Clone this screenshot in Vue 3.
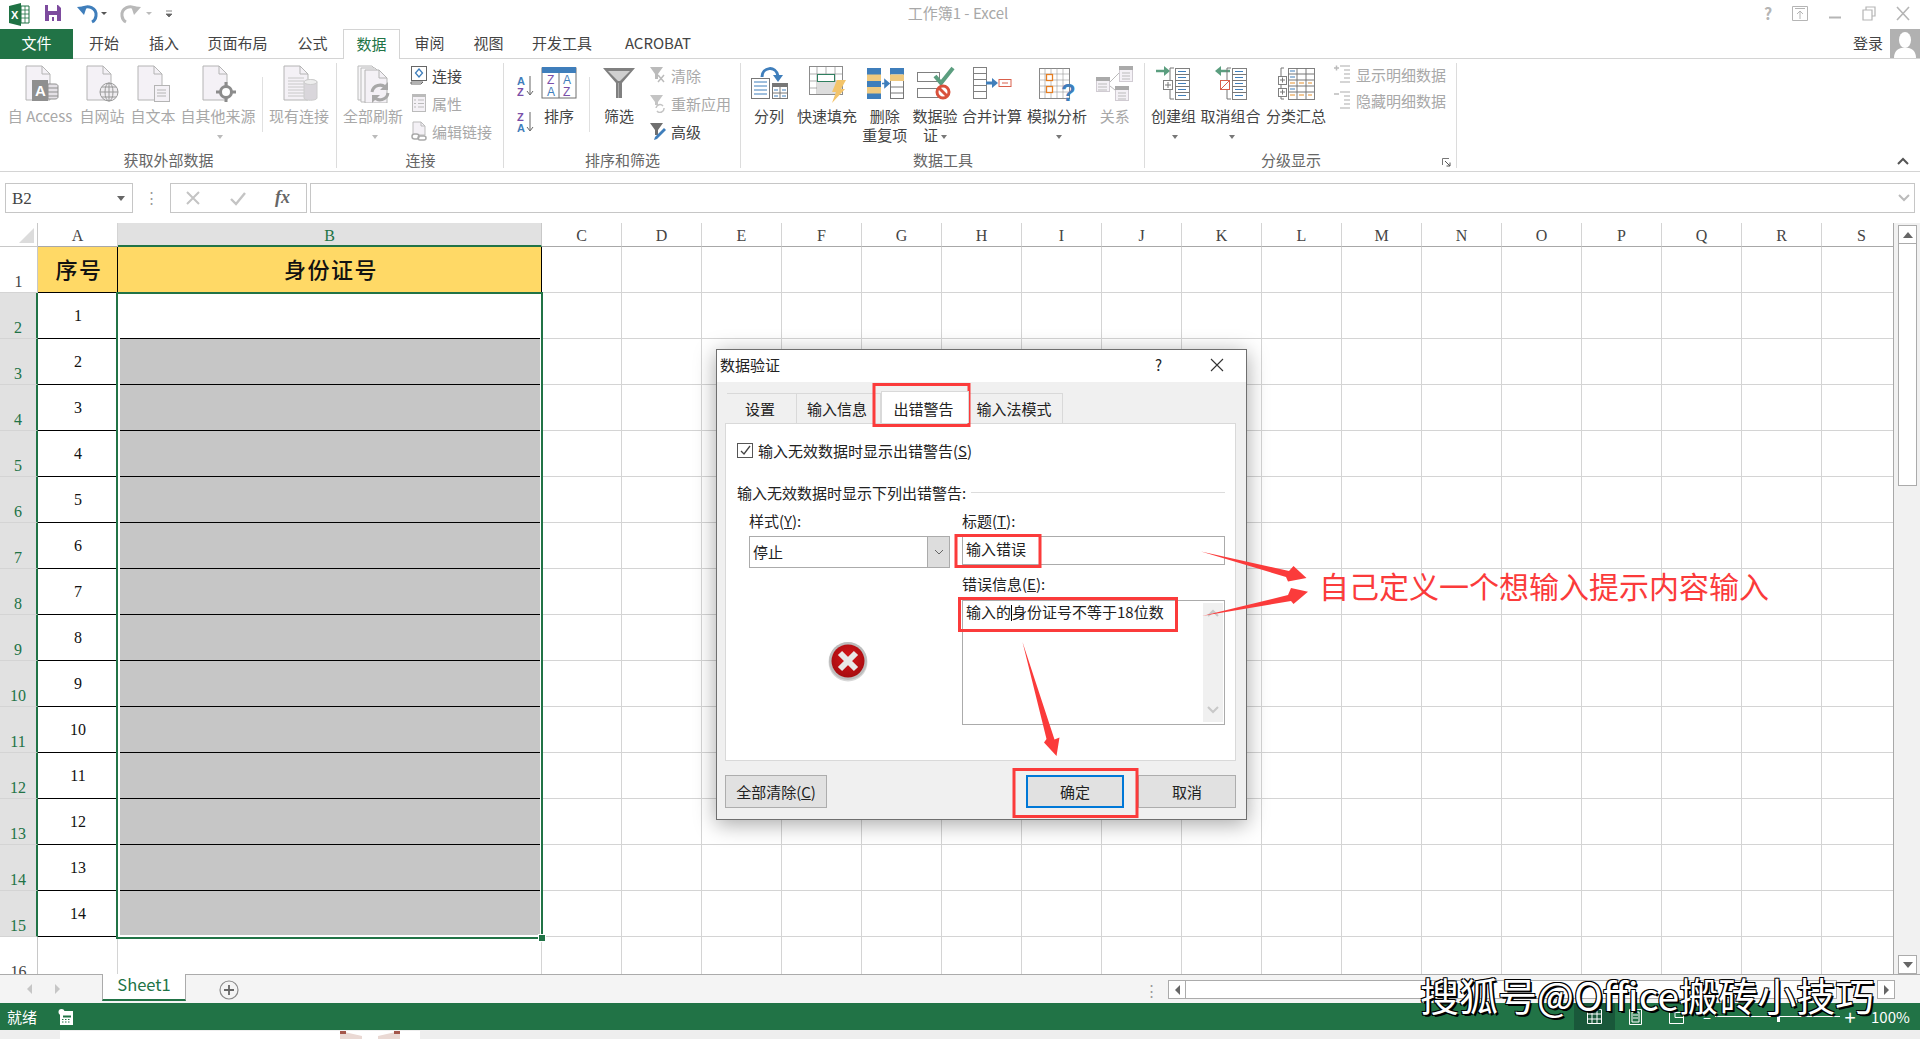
<template>
  <div class="app">
    <!-- 标题栏 -->
    <div class="titlebar">
      <svg class="qat" width="180" height="29" viewBox="0 0 180 29">
        <path d="M9 6l12-3v23l-12-3z" fill="#1f7244" />
        <path d="M21 6h8v17h-8z" fill="#fff" stroke="#1f7244" />
        <path d="M21 10h8M21 14h8M21 18h8M25 6v17" stroke="#1f7244" stroke-width=".8" />
        <text x="11" y="19" font-size="11" font-weight="700" fill="#fff" font-family="Liberation Sans">X</text>
        <path d="M45 5h13l3 3v13H45z" fill="#7d4b9e" />
        <path d="M48 5h9v6h-9z" fill="#fff" />
        <path d="M49 15h8v6h-8z" fill="#fff" />
        <path d="M52 17h2v4h-2z" fill="#7d4b9e" />
        <path d="M81 9c7-5 16-1 15 7-.4 3-2 5-4 6" fill="none" stroke="#3f7ebb" stroke-width="3" />
        <path d="M77 7l10-1-3 9z" fill="#3f7ebb" />
        <path d="M101 12h6l-3 3z" fill="#555" />
        <path d="M137 9c-7-5-16-1-15 7 .4 3 2 5 4 6" fill="none" stroke="#b9b9b9" stroke-width="3" />
        <path d="M141 7l-10-1 3 9z" fill="#b9b9b9" />
        <path d="M146 12h6l-3 3z" fill="#bbb" />
        <path d="M166 11h6M166 14h6l-3 3z" stroke="#666" fill="#666" stroke-width=".8" />
      </svg>
      <div class="doc-title">工作簿1 - Excel</div>
      <div class="win-btns">
        <span class="help">?</span>
        <svg width="16" height="15" viewBox="0 0 16 15"><path d="M.5.5h15v14H.5zM3 2.5h10M8 13V5M5 8l3-3 3 3" fill="none" stroke="#b5b5b5" /></svg>
        <svg width="14" height="15" viewBox="0 0 14 15"><path d="M1 11.5h12" stroke="#b5b5b5" stroke-width="2" /></svg>
        <svg width="14" height="15" viewBox="0 0 14 15"><path d="M4 4V1h9v9h-3M1 4h9v10H1z" fill="none" stroke="#b5b5b5" stroke-width="1.2" /></svg>
        <svg width="14" height="15" viewBox="0 0 14 15"><path d="M1 1l12 13M13 1L1 14" stroke="#b5b5b5" stroke-width="1.6" /></svg>
      </div>
    </div>

    <!-- 选项卡 -->
    <div class="tabs">
      <div
        v-for="t in tabs"
        :key="t.name"
        class="tab"
        :class="{ file: t.name === '文件', active: t.name === '数据' }"
        :style="{ width: t.w + 'px' }"
      >{{ t.name }}</div>
      <div class="login">
        <span>登录</span>
        <svg width="30" height="29" viewBox="0 0 30 29">
          <path d="M0 0h30v29H0z" fill="#b1b1b1" />
          <ellipse cx="15" cy="11" rx="6" ry="8" fill="#fff" />
          <path d="M4 29c0-7 4-9 7-10h8c3 1 7 3 7 10z" fill="#fff" />
        </svg>
      </div>
    </div>

    <!-- 功能区 -->
    <div class="ribbon">
      <div v-for="g in groups" :key="g.label" class="group" :style="{ width: g.w + 'px' }">
        <div class="group-body">
          <template v-for="(b, i) in g.items" :key="i">
            <div v-if="b.sep" class="inner-sep" :style="{ marginLeft: b.ml + 'px', marginRight: b.mr + 'px' }"></div>
            <div
              v-else-if="b.stack"
              class="stack"
              :class="{ tight: b.tight }"
              :style="{ width: b.w + 'px' }"
            >
              <div v-for="s in b.stack" :key="s.label" class="small" :class="{ off: s.off }">
                <svg width="20" height="20" viewBox="0 0 20 20" v-html="icons[s.icon]"></svg>
                <span>{{ s.label }}</span>
              </div>
            </div>
            <div v-else-if="b.sort" class="sort-pair" :style="{ width: b.w + 'px' }">
              <svg width="20" height="24" viewBox="0 0 20 24" v-html="icons.az"></svg>
              <svg width="20" height="24" viewBox="0 0 20 24" v-html="icons.za"></svg>
            </div>
            <div v-else class="big" :class="{ off: b.off }" :style="{ width: b.w + 'px' }">
              <svg width="40" height="38" viewBox="0 0 40 38" v-html="icons[b.icon]"></svg>
              <div class="big-label">{{ b.label }}</div>
              <div class="big-label second">
                {{ b.line2 }}<i v-if="b.arrow" class="caret"></i>
              </div>
            </div>
          </template>
        </div>
        <div class="group-label" :class="{ launch: g.launcher }">
          {{ g.label }}
          <svg v-if="g.launcher" class="launcher" width="9" height="9" viewBox="0 0 9 9">
            <path d="M.5 7V.5H7" fill="none" stroke="#777" /><path d="M3 3l5 5M8 4.5V8H4.5" fill="none" stroke="#555" />
          </svg>
        </div>
      </div>
      <svg class="collapse" width="12" height="8" viewBox="0 0 12 8"><path d="M1 7l5-5 5 5" fill="none" stroke="#555" stroke-width="2" /></svg>
    </div>

    <!-- 编辑栏 -->
    <div class="formula">
      <div class="name-box">B2<i class="name-caret"></i></div>
      <div class="dots">⋮</div>
      <div class="fx-box">
        <svg width="16" height="16" viewBox="0 0 16 16"><path d="M2 2l12 12M14 2L2 14" stroke="#c4c4c4" stroke-width="2" /></svg>
        <svg width="18" height="16" viewBox="0 0 18 16"><path d="M2 9l5 5L16 3" fill="none" stroke="#c4c4c4" stroke-width="2.4" /></svg>
        <span class="fx">fx</span>
      </div>
      <div class="fx-input">
        <svg width="12" height="8" viewBox="0 0 12 8"><path d="M1 1l5 5 5-5" fill="none" stroke="#bbb" stroke-width="2" /></svg>
      </div>
    </div>

    <!-- 工作表 -->
    <div class="work">
      <div class="sheet-wrap">
        <div class="sheet">
          <div class="corner"><i></i></div>
          <div v-for="c in cols" :key="c" class="col-head" :class="{ on: c === 'B' }">{{ c }}</div>
          <template v-for="r in 16" :key="r">
            <div class="row-head" :class="{ on: r >= 2 && r <= 15 }">{{ r }}</div>
            <div v-for="c in cols" :key="c" :class="cellClass(r, c)">
              <template v-if="c === 'A' && r === 1">序号</template>
              <template v-else-if="c === 'A' && r <= 15">{{ r - 1 }}</template>
              <template v-else-if="c === 'B' && r === 1">身份证号</template>
              <div v-else-if="c === 'B' && r >= 2 && r <= 15" class="b-fill" :class="{ blank: r === 2, end: r === 15 }"></div>
            </div>
          </template>
          <div class="selection"><i></i></div>
        </div>
      </div>
      <div class="vscroll">
        <div class="sb-btn"><i class="up"></i></div>
        <div class="sb-thumb"></div>
        <div class="sb-track"></div>
        <div class="sb-btn"><i class="down"></i></div>
      </div>
    </div>

    <!-- 工作表标签 -->
    <div class="sheetbar">
      <div class="nav"><i class="l"></i><i class="r"></i></div>
      <div class="sheet-tab">Sheet1</div>
      <svg class="add" width="20" height="20" viewBox="0 0 20 20">
        <circle cx="10" cy="10" r="9" fill="none" stroke="#8a8a8a" stroke-width="1.2" />
        <path d="M10 5v10M5 10h10" stroke="#666" stroke-width="1.8" />
      </svg>
      <div class="bar-dots">⋮</div>
      <div class="hscroll">
        <div class="h-btn"><i class="l"></i></div>
        <div class="h-thumb"></div>
        <div class="h-track"></div>
        <div class="h-btn"><i class="r"></i></div>
      </div>
    </div>

    <!-- 状态栏 -->
    <div class="status">
      <span class="ready">就绪</span>
      <svg width="16" height="16" viewBox="0 0 16 16">
        <rect x="2" y="2" width="13" height="14" fill="#fff" />
        <circle cx="3.5" cy="3" r="3" fill="#fff" />
        <path d="M5 6.5h8v2H5z" fill="#217346" />
        <path d="M4 10.5h8M4 13h8" stroke="#217346" stroke-dasharray="1.5 1.5" />
      </svg>
      <div class="status-right">
        <div class="view on"><svg width="15" height="15" viewBox="0 0 15 15"><path d="M.5.5h14v14H.5zM5 .5v14M10 .5v14M.5 5h14M.5 10h14" fill="none" stroke="#fff" /></svg></div>
        <div class="view"><svg width="13" height="16" viewBox="0 0 13 16"><path d="M.5.5h12v15H.5zM3 3h7v10H3zM4 6h5M4 9h5" fill="none" stroke="#fff" /></svg></div>
        <div class="view"><svg width="15" height="15" viewBox="0 0 15 15"><path d="M.5 3.5h14v11H.5zM6 .5v8h8" fill="none" stroke="#fff" /></svg></div>
        <span class="minus">–</span>
        <div class="zoom-track"><i></i></div>
        <span class="plus">+</span>
        <span class="pct">100%</span>
      </div>
    </div>

    <!-- 底部残留 -->
    <div class="strip">
      <div class="strip-win">
        <svg width="60" height="9" viewBox="0 0 60 9"><path d="M0 0l22 5v4H0zM60 0L38 5v4h22z" fill="#ead9d4" /><path d="M0 0h6v3H0zM54 0h6v3h-6z" fill="#a4564a" /></svg>
      </div>
    </div>

    <!-- 数据验证对话框 -->
    <div class="dialog">
      <div class="dlg-title">
        <span>数据验证</span>
        <span class="dlg-q">?</span>
        <svg width="14" height="14" viewBox="0 0 14 14"><path d="M1 1l12 12M13 1L1 13" stroke="#333" stroke-width="1.1" /></svg>
      </div>
      <div class="dlg-tabs">
        <div v-for="t in dlgTabs" :key="t.name" class="dlg-tab" :class="{ active: t.name === '出错警告' }" :style="{ width: t.w + 'px' }">{{ t.name }}</div>
      </div>
      <div class="panel">
        <div class="check-row">
          <span class="check">
            <svg width="13" height="13" viewBox="0 0 13 13"><path d="M2 7l3 3 6-8" fill="none" stroke="#444" stroke-width="1.3" /></svg>
          </span>
          <span>输入无效数据时显示出错警告(<u>S</u>)</span>
        </div>
        <div class="section">
          <span>输入无效数据时显示下列出错警告:</span><i></i>
        </div>
        <div class="form">
          <div class="form-left">
            <div class="f-label">样式(<u>Y</u>):</div>
            <div class="select">
              <span>停止</span>
              <div class="sel-btn">
                <svg width="10" height="6" viewBox="0 0 10 6"><path d="M1 1l4 4 4-4" fill="none" stroke="#666" /></svg>
              </div>
            </div>
            <svg class="err" width="42" height="42" viewBox="0 0 42 42">
              <defs>
                <radialGradient id="eg" cx="50%" cy="40%" r="60%">
                  <stop offset="0" stop-color="#d8161a" />
                  <stop offset="1" stop-color="#a60c10" />
                </radialGradient>
              </defs>
              <circle cx="21" cy="22" r="19.5" fill="#d8d8d8" />
              <circle cx="21" cy="21" r="19" fill="#bdbdbd" />
              <circle cx="21" cy="21" r="16.5" fill="url(#eg)" />
              <path d="M13 13l16 16M29 13L13 29" stroke="#e8e8e8" stroke-width="6" />
            </svg>
          </div>
          <div class="form-right">
            <div class="f-label">标题(<u>T</u>):</div>
            <div class="text-input">输入错误</div>
            <div class="f-label second">错误信息(<u>E</u>):</div>
            <div class="textarea">
              <span>输入的<i class="text-caret"></i>身份证号不等于18位数</span>
              <div class="ta-scroll">
                <svg width="12" height="8" viewBox="0 0 12 8"><path d="M1 7l5-5 5 5" fill="none" stroke="#c8c8c8" stroke-width="2" /></svg>
                <svg width="12" height="8" viewBox="0 0 12 8"><path d="M1 1l5 5 5-5" fill="none" stroke="#c8c8c8" stroke-width="2" /></svg>
              </div>
            </div>
          </div>
        </div>
      </div>
      <div class="dlg-foot">
        <div class="btn clear">全部清除(<u>C</u>)</div>
        <div class="btn ok">确定</div>
        <div class="btn cancel">取消</div>
      </div>
    </div>

    <!-- 红色标注 -->
    <svg class="marks" width="1920" height="1039" viewBox="0 0 1920 1039">
      <g fill="none" stroke="#fb3b3b" stroke-width="3">
        <rect x="874" y="384.5" width="95" height="41" />
        <rect x="956" y="535.5" width="84" height="31" />
        <rect x="959.5" y="598.5" width="217" height="32" />
        <rect x="1014" y="769.5" width="123" height="47" />
      </g>
      <g fill="#fb3b3b">
        <path d="M1201 551.5L1289 571 1293.5 566 1306.5 578 1288 581.500 1286 577z" />
        <path d="M1202 616L1288 595 1291 588 1308 591.700 1293.500 604 1291 601z" />
        <path d="M1022.500 642l24 97-2.500 3.500 12.500 13.500 3-18.500-5 2z" />
      </g>
    </svg>
    <div class="note">自己定义一个想输入提示内容输入</div>
    <div class="watermark">搜狐号@Office搬砖小技巧</div>
  </div>
</template>

<script setup>
const tabs = [
  { name: '文件', w: 73 }, { name: '开始', w: 62 }, { name: '插入', w: 58 },
  { name: '页面布局', w: 89 }, { name: '公式', w: 61 }, { name: '数据', w: 57 },
  { name: '审阅', w: 59 }, { name: '视图', w: 59 }, { name: '开发工具', w: 88 },
  { name: 'ACROBAT', w: 104 },
]

const dlgTabs = [
  { name: '设置', w: 70 }, { name: '输入信息', w: 84 },
  { name: '出错警告', w: 88 }, { name: '输入法模式', w: 94 },
]

const cols = 'ABCDEFGHIJKLMNOPQRS'.split('')

const cellClass = (r, c) => {
  if (c === 'A' && r === 1) return 'cell head-cell first'
  if (c === 'B' && r === 1) return 'cell head-cell'
  if (c === 'A' && r <= 15) return 'cell a-cell'
  if (c === 'B' && r <= 15) return 'cell b-cell'
  return 'cell'
}

// 功能区图标
const G = '#8c8c8c'
const BLUE = '#3f7ebb'
const page = (x, fill = '#f4f1f6') =>
  `<path d="M${x} 1h16l8 8v26H${x}z" fill="${fill}" stroke="#b4b4b4"/><path d="M${x + 16} 1v8h8" fill="none" stroke="#b4b4b4"/>`
const rows = (x, w, ys, c = '#8a8a8a') => ys.map(y => `<path d="M${x} ${y}h${w}" stroke="${c}"/>`).join('')
const box = (x, y, w, h, s = '#808080', f = '#fff') =>
  `<rect x="${x + .5}" y="${y + .5}" width="${w}" height="${h}" fill="${f}" stroke="${s}"/>`

const icons = {
  access: page(6) +
    `<rect x="12" y="15" width="16" height="21" fill="#8f8f8f"/><text x="15" y="31" font-size="15" font-weight="700" fill="#fff" font-family="Liberation Sans">A</text>` +
    `<path d="M28 19h7c2 0 3 1 3 2v11c0 1-1 2-3 2h-7z" fill="#e4e1e6" stroke="#8f8f8f"/><path d="M28 23h10M28 27h10M28 31h10" stroke="#8f8f8f"/>`,
  web: page(5) +
    `<circle cx="27" cy="27" r="9" fill="#efedf0" stroke="#999"/><ellipse cx="27" cy="27" rx="4" ry="9" fill="none" stroke="#999"/><path d="M18 27h18M20 22h14M20 32h14M27 18v18" stroke="#999"/>`,
  text: page(5) + box(21, 20, 15, 16, '#b4b4b4', '#f4f1f6') + rows(24, 9, [25, 28, 31], '#b4b4b4'),
  other: page(5) +
    `<circle cx="28" cy="27" r="5.500" fill="#fff" stroke="${G}" stroke-width="3"/><path d="M28 17v4M28 33v4M18 27h4M34 27h4" stroke="${G}" stroke-width="3"/>`,
  existing: page(5) + rows(9, 16, [13, 16, 19, 22, 25, 28, 31], '#c8c8c8') +
    `<path d="M25 17c0-3 13-3 13 0v16c0 3-13 3-13 0z" fill="#d9d6db" stroke="#ccc"/><ellipse cx="31.500" cy="17" rx="6.500" ry="2.500" fill="#eee" stroke="#ccc"/>`,
  refresh: `<path d="M5 1h14l8 8v26H5z" fill="#f7f6f8" stroke="#bbb"/><path d="M8 3h14l8 8v26H8z" fill="#f7f6f8" stroke="#bbb"/><path d="M12 5h14l8 8v25H12z" fill="#f4f1f6" stroke="#b4b4b4"/><path d="M26 5v8h8" fill="none" stroke="#b4b4b4"/>` +
    `<path d="M19 27a8 8 0 0 1 14-4" fill="none" stroke="#a8a8a8" stroke-width="3"/><path d="M35 28a8 8 0 0 1-14 4" fill="none" stroke="#a8a8a8" stroke-width="3"/><path d="M35 17v8h-8zM19 38v-8h8z" fill="#a8a8a8"/>`,
  sort: `<rect x="3" y="3" width="34" height="30" fill="#fff" stroke="#6f6f6f"/><rect x="3" y="2" width="34" height="6" fill="${BLUE}"/><path d="M20 8v25" stroke="#6f6f6f"/>` +
    `<g font-size="12" font-family="Liberation Sans"><text x="8" y="19" fill="#7a4fa8">Z</text><text x="8" y="31" fill="${BLUE}">A</text><text x="24" y="19" fill="${BLUE}">A</text><text x="24" y="31" fill="#7a4fa8">Z</text></g>`,
  filter: `<path d="M4 3h32L23 18v15h-6V18z" fill="#808080"/><path d="M9 6h22L21 16h-2z" fill="#cfcfcf"/><path d="M19 18h1v15h-1z" fill="#aaa"/>`,
  split: `<rect x="2.500" y="13.500" width="18" height="20" fill="#fff" stroke="#777"/>` + rows(5, 13, [17, 21, 25, 29], BLUE) +
    `<rect x="23.500" y="18.500" width="15" height="15" fill="#fff" stroke="#777"/><rect x="23" y="18" width="16" height="4" fill="#777"/><path d="M31 22v12M24 28h15" stroke="#777"/><path d="M25 25h4M33 25h4M25 31h4M33 31h4" stroke="${BLUE}"/>` +
    `<path d="M13 12C13 2 27 0 29 11" fill="none" stroke="${BLUE}" stroke-width="3"/><path d="M24 10h10l-5 7z" fill="${BLUE}"/>`,
  flash: `<rect x="2.500" y="1.500" width="33" height="28" fill="#fff" stroke="${G}"/><path d="M2 9h34M2 16h34M2 23h34M10 1v29M28 1v29M19 1v8" stroke="${G}" stroke-width=".7"/><rect x="10" y="16" width="18" height="13" fill="#ddd"/><rect x="10.500" y="9.500" width="17" height="7" fill="#fff" stroke="#2f7f5f"/>` +
    `<path d="M30 15h9l-5 9h4L25 38l4-11h-4z" fill="#f3c46a"/>`,
  dedupe: `<rect x="2" y="3" width="14" height="31" fill="${BLUE}"/><path d="M2 9.500h14v6.500H2zM2 22h14v6.500H2z" fill="#efc97f"/>` +
    `<rect x="25.500" y="3.500" width="13" height="30" fill="#fff" stroke="#777"/><rect x="25" y="3" width="14" height="6.500" fill="${BLUE}"/><rect x="25" y="9.500" width="14" height="6.500" fill="#efc97f"/><path d="M25 22h14M25 28h14" stroke="#777"/>` +
    `<path d="M17 18.500h4M20 15l4 3.500-4 3.500z" stroke="${BLUE}" fill="${BLUE}" stroke-width="1.6"/>`,
  validate: box(2, 7, 22, 9) + box(2, 23, 22, 9) +
    `<path d="M20 11l6 7L38 3" fill="none" stroke="#5b9e7f" stroke-width="4"/><circle cx="28" cy="27" r="6" fill="#fff" stroke="#d9513c" stroke-width="3"/><path d="M24 23l8 8" stroke="#d9513c" stroke-width="3"/>`,
  merge: box(1, 2, 13, 31) + `<path d="M1 8.500h13M1 14.500h13M1 20.500h13M1 26.500h13" stroke="#808080"/>` +
    `<path d="M14 18h7" stroke="${BLUE}" stroke-width="3"/><path d="M20 13l6 5-6 5z" fill="${BLUE}"/><rect x="27" y="14.500" width="12" height="7" fill="#fff" stroke="#d9604c"/><path d="M30 18h6" stroke="#d9604c"/>`,
  whatif: box(2, 3, 30, 30, '#888') + `<path d="M2 9h30M2 15h30M2 21h30M2 27h30M8 3v30M14 3v30M20 3v30M26 3v30" stroke="#999" stroke-width=".6"/>` +
    `<rect x="9.500" y="9.500" width="6" height="6" fill="#fff" stroke="#e67e22" stroke-width="1.300"/><rect x="9.500" y="21.500" width="6" height="6" fill="#fff" stroke="#e67e22" stroke-width="1.300"/>` +
    `<text x="24" y="36" font-size="24" font-weight="700" fill="${BLUE}" font-family="Liberation Sans">?</text>`,
  relate: box(24, 1, 13, 15, '#d0cbd2', '#f4f1f6') + `<rect x="24" y="1" width="14" height="4" fill="#aaa"/>` + rows(27, 8, [8, 11, 14], '#bbb') +
    box(1, 12, 13, 14, '#d0cbd2', '#f4f1f6') + `<rect x="1" y="12" width="14" height="4" fill="#aaa"/>` + rows(3, 9, [19, 22, 25], '#bbb') +
    box(20, 21, 13, 14, '#d0cbd2', '#f4f1f6') + `<rect x="20" y="21" width="14" height="4" fill="#aaa"/>` + rows(23, 8, [28, 31, 34], '#bbb') +
    `<path d="M15 17l9-9M15 21l5 4" stroke="#bbb"/>`,
  group: `<path d="M2 6h12" stroke="#5b9e7f" stroke-width="2.500"/><path d="M10 1l6 5-6 5z" fill="#5b9e7f"/><path d="M20 3h-4v31h4" fill="none" stroke="#777"/>` + box(9, 15, 9, 9) + `<path d="M11 20h6M14 17v6" stroke="#777"/>` +
    box(21, 3, 14, 31) + `<path d="M21 9.500h14M21 15.500h14M21 21.500h14M21 27.500h14" stroke="#777"/><path d="M24 6.500h8M24 12.500h8M24 18.500h8M24 24.500h8M24 30.500h8" stroke="${BLUE}"/>`,
  ungroup: `<path d="M8 6h11" stroke="#5b9e7f" stroke-width="2.500"/><path d="M10 1L4 6l6 5z" fill="#5b9e7f"/><path d="M20 3h-4v31h4" fill="none" stroke="#777"/>` +
    `<rect x="9.500" y="15.500" width="9" height="9" fill="#fff" stroke="#d9604c"/><path d="M10 24l8-8" stroke="#d9604c"/>` +
    box(21, 3, 14, 31) + `<path d="M21 9.500h14M21 15.500h14M21 21.500h14M21 27.500h14" stroke="#777"/><path d="M24 6.500h8M24 12.500h8M24 18.500h8M24 24.500h8M24 30.500h8" stroke="${BLUE}"/>`,
  subtotal: `<path d="M8 3H5v31h3" fill="none" stroke="#777"/>` + box(2, 11, 8, 8) + box(2, 23, 8, 8) + `<path d="M4 15h5M6.500 12.500v5M4 27h5M6.500 24.500v5" stroke="#777"/>` +
    box(12, 3, 26, 31) + `<path d="M12 9h26M12 15h26M12 21h26M12 27h26M21 3v31M30 3v31" stroke="#777"/>` +
    `<path d="M14 6h5M14 12h5M14 24h5" stroke="${BLUE}" stroke-width="1.200"/><path d="M14 18h5M23 18h5M32 18h4M14 30h5M23 30h5M32 30h4" stroke="#e8912d" stroke-width="1.200"/>`,

  az: `<g font-size="11" font-family="Liberation Sans" font-weight="700"><text x="2" y="11" fill="${BLUE}">A</text><text x="2" y="22" fill="#7a4fa8">Z</text></g><path d="M15 2v18M12 17l3 4 3-4" fill="none" stroke="#666"/>`,
  za: `<g font-size="11" font-family="Liberation Sans" font-weight="700"><text x="2" y="11" fill="#7a4fa8">Z</text><text x="2" y="22" fill="${BLUE}">A</text></g><path d="M15 2v18M12 17l3 4 3-4" fill="none" stroke="#666"/>`,
  connect: `<rect x="2.500" y="1.500" width="15" height="14" fill="#fff" stroke="#666"/><path d="M2 17h12l-2 2H2z" fill="none" stroke="#666"/><path d="M10 4l3.500 4L10 12 6.500 8z" fill="#fff" stroke="${BLUE}" stroke-width="1.300"/>`,
  prop: `<rect x="3.500" y="1.500" width="13" height="17" fill="#f4f1f6" stroke="#bbb"/><rect x="3" y="1" width="14" height="3" fill="#bbb"/><path d="M5 7h2M5 10.500h2M5 14h2M9 7h6M9 10.500h6M9 14h6" stroke="#bbb"/>`,
  links: `<path d="M4 1h8l4 4v9H4z" fill="#f4f1f6" stroke="#bbb"/><path d="M12 1v4h4" fill="none" stroke="#bbb"/><rect x="3" y="13" width="7" height="5" rx="2.500" fill="#fff" stroke="#aaa" stroke-width="1.500"/><rect x="9" y="15" width="8" height="4" rx="2" fill="none" stroke="#aaa" stroke-width="1.500"/>`,
  clear: `<path d="M2 2h13L10 9v5H7V9z" fill="#bbb"/><path d="M10 10l6 7M16 10l-6 7" stroke="#bbb" stroke-width="1.500"/>`,
  reapply: `<path d="M2 2h13L10 9v3H7V9z" fill="#c4c4c4"/><path d="M8 15a4 4 0 0 1 7-2M16 15a4 4 0 0 1-7 3" fill="none" stroke="#c4c4c4" stroke-width="1.500"/>`,
  advanced: `<path d="M2 2h13L10 9v5H7V9z" fill="#6f6f6f"/><path d="M6 19l1-3 9-9 2 2-9 9z" fill="${BLUE}"/>`,
  show: `<path d="M1 4h5M3.500 1.500v5" stroke="#bbb" stroke-width="1.500"/><path d="M7 2h10M11 6h6M11 10h6M11 14h6M7 18h10" stroke="#c8c8c8" stroke-width="1.500"/>`,
  hide: `<path d="M1 4h5" stroke="#bbb" stroke-width="1.500"/><path d="M7 2h10M11 6h6M11 10h6M11 14h6M7 18h10" stroke="#c8c8c8" stroke-width="1.500"/>`,
}

const groups = [
  {
    label: '获取外部数据', w: 337,
    items: [
      { label: '自 Access', icon: 'access', w: 80, off: true },
      { label: '自网站', icon: 'web', w: 44, off: true },
      { label: '自文本', icon: 'text', w: 58, off: true },
      { label: '自其他来源', icon: 'other', w: 72, off: true, arrow: true },
      { sep: true, ml: 8, mr: 0 },
      { label: '现有连接', icon: 'existing', w: 72, off: true },
    ],
  },
  {
    label: '连接', w: 167,
    items: [
      { label: '全部刷新', icon: 'refresh', w: 72, off: true, arrow: true },
      { stack: [
        { label: '连接', icon: 'connect' },
        { label: '属性', icon: 'prop', off: true },
        { label: '编辑链接', icon: 'links', off: true },
      ], w: 94 },
    ],
  },
  {
    label: '排序和筛选', w: 237,
    items: [
      { sort: true, w: 34 },
      { label: '排序', icon: 'sort', w: 42 },
      { sep: true, ml: 9, mr: 0 },
      { label: '筛选', icon: 'filter', w: 58 },
      { stack: [
        { label: '清除', icon: 'clear', off: true },
        { label: '重新应用', icon: 'reapply', off: true },
        { label: '高级', icon: 'advanced' },
      ], w: 93 },
    ],
  },
  {
    label: '数据工具', w: 404,
    items: [
      { label: '分列', icon: 'split', w: 56 },
      { label: '快速填充', icon: 'flash', w: 60 },
      { label: '删除', line2: '重复项', icon: 'dedupe', w: 55.5 },
      { label: '数据验', line2: '证', icon: 'validate', w: 45, arrow: true },
      { label: '合并计算', icon: 'merge', w: 69 },
      { label: '模拟分析', icon: 'whatif', w: 61, arrow: true },
      { label: '关系', icon: 'relate', w: 54.5, off: true },
    ],
  },
  {
    label: '分级显示', w: 312, launcher: true,
    items: [
      { label: '创建组', icon: 'group', w: 57, arrow: true },
      { label: '取消组合', icon: 'ungroup', w: 57, arrow: true },
      { label: '分类汇总', icon: 'subtotal', w: 74 },
      { stack: [
        { label: '显示明细数据', icon: 'show', off: true },
        { label: '隐藏明细数据', icon: 'hide', off: true },
      ], w: 123, tight: true },
    ],
  },
]
</script>

<style>
html, body {
  margin: 0;
  background: #fff;
}
</style>

<style scoped>
.app {
  position: relative;
  width: 1920px;
  height: 1039px;
  overflow: hidden;
  display: flex;
  flex-direction: column;
  font-family: "Noto Sans CJK SC", "Liberation Sans", sans-serif;
  font-size: 15px;
  color: #444;
  background: #fff;
}

/* title bar */
.titlebar {
  height: 29px;
  display: flex;
  align-items: center;
  justify-content: space-between;
  flex: none;
}
.qat { flex: none; }
.doc-title {
  flex: 1;
  text-align: center;
  color: #a8a8a8;
  font-size: 15px;
  padding-right: 28px;
  padding-bottom: 5px;
}
.win-btns {
  width: 156px;
  display: flex;
  align-items: center;
  justify-content: space-between;
  padding-right: 10px;
  padding-bottom: 3px;
  box-sizing: border-box;
}
.help {
  color: #b5b5b5;
  font-weight: 700;
  font-size: 16px;
  line-height: 16px;
}

/* tabs */
.tabs {
  height: 30px;
  display: flex;
  flex: none;
  border-bottom: 1px solid #d4d4d4;
  box-sizing: border-box;
}
.tab {
  text-align: center;
  line-height: 27px;
  color: #444;
  box-sizing: border-box;
}
.tab.file {
  background: #217346;
  color: #fff;
  height: 30px;
}
.tab.active {
  color: #217346;
  background: #fff;
  border: 1px solid #d4d4d4;
  border-bottom: 0;
  height: 30px;
}
.login {
  margin-left: auto;
  display: flex;
  align-items: flex-start;
  gap: 7px;
  line-height: 27px;
}

/* ribbon */
.ribbon {
  position: relative;
  height: 113px;
  flex: none;
  display: flex;
  border-bottom: 1px solid #d4d4d4;
  box-sizing: border-box;
}
.group {
  box-sizing: border-box;
  display: flex;
  flex-direction: column;
  position: relative;
  padding-top: 6px;
}
.group::after {
  content: "";
  position: absolute;
  right: 0;
  top: 4px;
  bottom: 3px;
  width: 1px;
  background: #dcdcdc;
}
.group-body {
  display: flex;
  height: 86px;
}
.big {
  flex: none;
  display: flex;
  flex-direction: column;
  align-items: center;
  color: #444;
}
.big svg { flex: none; }
.big.off { color: #a8a8a8; }
.big-label {
  line-height: 19px;
  height: 19px;
  white-space: nowrap;
  margin-top: 3px;
}
.big-label.second {
  margin-top: 0;
}
.caret {
  display: inline-block;
  width: 0;
  height: 0;
  border-left: 3.5px solid transparent;
  border-right: 3.5px solid transparent;
  border-top: 4px solid #777;
  margin-left: 3px;
  vertical-align: middle;
}
.big.off .caret { border-top-color: #bbb; }
.inner-sep {
  width: 1px;
  height: 55px;
  margin-top: 12px;
  background: #e0e0e0;
  flex: none;
}
.stack {
  flex: none;
  display: flex;
  flex-direction: column;
  gap: 8px;
  box-sizing: border-box;
}
.stack.tight { margin-top: -1px; gap: 6px; }
.small {
  display: flex;
  align-items: center;
  gap: 3px;
  height: 20px;
  white-space: nowrap;
  color: #444;
}
.small.off { color: #a8a8a8; }
.sort-pair {
  flex: none;
  display: flex;
  flex-direction: column;
  align-items: center;
  gap: 12px;
  padding-top: 9px;
  padding-left: 8px;
  box-sizing: border-box;
}
.group-label {
  text-align: center;
  color: #666;
  line-height: 18px;
  position: relative;
}
.group-label.launch { padding-right: 20px; }
.launcher {
  position: absolute;
  right: 6px;
  top: 7px;
}
.collapse {
  position: absolute;
  right: 11px;
  top: 98px;
}

/* formula bar */
.formula {
  height: 51px;
  flex: none;
  display: flex;
  align-items: flex-start;
  padding: 11px 5px 0;
  box-sizing: border-box;
}
.name-box {
  width: 128px;
  height: 30px;
  border: 1px solid #c6c6c6;
  box-sizing: border-box;
  font-family: "Liberation Serif", serif;
  font-size: 17px;
  color: #444;
  line-height: 30px;
  padding-left: 6px;
  position: relative;
}
.name-caret {
  position: absolute;
  right: 7px;
  top: 12px;
  border-left: 4px solid transparent;
  border-right: 4px solid transparent;
  border-top: 5px solid #666;
}
.dots {
  width: 37px;
  text-align: center;
  color: #999;
  line-height: 28px;
  font-size: 15px;
}
.fx-box {
  width: 137px;
  height: 30px;
  border: 1px solid #c6c6c6;
  box-sizing: border-box;
  display: flex;
  align-items: center;
  justify-content: space-between;
  padding: 0 16px 0 14px;
}
.fx {
  font-family: "Liberation Serif", serif;
  font-style: italic;
  font-weight: 700;
  font-size: 18px;
  color: #666;
  line-height: 18px;
  padding-bottom: 3px;
}
.fx-input {
  flex: 1;
  height: 30px;
  margin-left: 3px;
  border: 1px solid #c6c6c6;
  box-sizing: border-box;
  display: flex;
  align-items: center;
  justify-content: flex-end;
  padding-right: 4px;
}

/* sheet */
.work {
  height: 751px;
  flex: none;
  display: flex;
}
.sheet-wrap {
  width: 1894px;
  height: 751px;
  overflow: hidden;
  border-right: 1px solid #a8a8a8;
  box-sizing: border-box;
}
.sheet {
  position: relative;
  display: grid;
  grid-template-columns: 38px 80px 424px repeat(17, 80px);
  grid-template-rows: 24px repeat(15, 46px) 46px;
  font-family: "Liberation Serif", serif;
  width: 1902px;
}
.corner {
  border-right: 1px solid #c8c8c8;
  border-bottom: 1px solid #c8c8c8;
  box-sizing: border-box;
  position: relative;
}
.corner i {
  position: absolute;
  right: 3px;
  bottom: 3px;
  border-left: 15px solid transparent;
  border-bottom: 15px solid #dcdcdc;
}
.col-head {
  border-right: 1px solid #d4d4d4;
  border-bottom: 1px solid #a8a8a8;
  box-sizing: border-box;
  text-align: center;
  font-size: 16px;
  line-height: 26px;
  color: #444;
}
.col-head.on {
  background: #e1e1e1;
  color: #217346;
  border-bottom: 2px solid #217346;
  border-right-color: #c8c8c8;
}
.row-head {
  border-right: 1px solid #c8c8c8;
  border-bottom: 1px solid #d4d4d4;
  box-sizing: border-box;
  display: flex;
  align-items: flex-end;
  justify-content: center;
  font-size: 16px;
  color: #444;
  line-height: 20px;
}
.row-head.on {
  background: #e1e1e1;
  color: #217346;
  border-right: 2px solid #217346;
}
.cell {
  border-right: 1px solid #d4d4d4;
  border-bottom: 1px solid #d4d4d4;
  box-sizing: border-box;
  min-width: 0;
}
.head-cell {
  background: #ffd966;
  border-right: 1px solid #000;
  border-bottom: 1px solid #000;
  display: flex;
  align-items: center;
  justify-content: center;
  font-family: "Noto Sans CJK SC", sans-serif;
  font-size: 22px;
  font-weight: 500;
  letter-spacing: 1.5px;
  padding: 0 0 3px 3px;
  color: #111;
}
.a-cell {
  border-right: 0;
  border-bottom: 1.5px solid #000;
  display: flex;
  align-items: center;
  justify-content: center;
  font-size: 16px;
  color: #111;
}
.b-cell {
  border-right: 0;
  border-bottom: 0;
  padding: 0 2px;
}
.b-fill {
  height: 100%;
  background: #c6c6c6;
  border-bottom: 1.5px solid #000;
  box-sizing: border-box;
}
.b-fill.blank { background: #fff; }
.b-fill.end {
  border-bottom: 0;
  height: 44px;
}
.selection {
  position: absolute;
  left: 116px;
  top: 69px;
  width: 427px;
  height: 647px;
  border: 2px solid #217346;
  box-sizing: border-box;
  pointer-events: none;
}
.selection i {
  position: absolute;
  right: -5px;
  bottom: -5px;
  width: 6px;
  height: 6px;
  background: #217346;
  border: 1px solid #fff;
}

/* vertical scrollbar */
.vscroll {
  flex: 1;
  background: #f1f1f1;
  display: flex;
  flex-direction: column;
  padding: 2px 3px 0 4px;
  box-sizing: border-box;
}
.sb-btn {
  height: 19px;
  background: #fff;
  border: 1px solid #ababab;
  box-sizing: border-box;
  display: flex;
  align-items: center;
  justify-content: center;
  flex: none;
}
.sb-btn i.up {
  border-left: 5px solid transparent;
  border-right: 5px solid transparent;
  border-bottom: 6px solid #666;
}
.sb-btn i.down {
  border-left: 5px solid transparent;
  border-right: 5px solid transparent;
  border-top: 6px solid #666;
}
.sb-thumb {
  height: 242px;
  background: #fff;
  border: 1px solid #ababab;
  border-top: 0;
  box-sizing: border-box;
  flex: none;
}
.sb-track { flex: 1; }

/* sheet tabs */
.sheetbar {
  height: 29px;
  flex: none;
  display: flex;
  align-items: flex-start;
  background: #f4f4f4;
  border-top: 1px solid #ababab;
  box-sizing: border-box;
}
.nav {
  width: 103px;
  height: 28px;
  display: flex;
  align-items: center;
  gap: 23px;
  padding-left: 27px;
  box-sizing: border-box;
}
.nav i.l {
  border-top: 5px solid transparent;
  border-bottom: 5px solid transparent;
  border-right: 5px solid #c6c6c6;
}
.nav i.r {
  border-top: 5px solid transparent;
  border-bottom: 5px solid transparent;
  border-left: 5px solid #c6c6c6;
}
.sheet-tab {
  width: 82px;
  height: 25px;
  background: #fff;
  margin-top: -1px;
  border: 1px solid #ababab;
  border-top: 0;
  border-bottom: 2px solid #217346;
  box-sizing: content-box;
  margin-left: -1px;
  padding-right: 0;
  text-align: center;
  color: #217346;
  font-size: 16.5px;
  line-height: 21px;
}
.add {
  margin-left: 33px;
  margin-top: 5px;
  flex: none;
}
.bar-dots {
  margin-left: 902px;
  width: 20px;
  color: #999;
  line-height: 30px;
  text-align: center;
}
.hscroll {
  margin-left: 7px;
  margin-top: 5px;
  width: 727px;
  height: 19px;
  display: flex;
}
.h-btn {
  width: 18px;
  height: 19px;
  background: #fff;
  border: 1px solid #ababab;
  box-sizing: border-box;
  display: flex;
  align-items: center;
  justify-content: center;
  flex: none;
}
.h-btn i.l {
  border-top: 5px solid transparent;
  border-bottom: 5px solid transparent;
  border-right: 5px solid #666;
}
.h-btn i.r {
  border-top: 5px solid transparent;
  border-bottom: 5px solid transparent;
  border-left: 5px solid #666;
}
.h-thumb {
  width: 651px;
  background: #fff;
  border: 1px solid #ababab;
  border-left: 0;
  box-sizing: border-box;
}
.h-track { flex: 1; }

/* status bar */
.status {
  height: 27px;
  flex: none;
  background: #217346;
  color: #fff;
  display: flex;
  align-items: center;
  padding-left: 7px;
  box-sizing: border-box;
}
.ready { width: 51px; font-size: 15px; }
.status-right {
  margin-left: auto;
  display: flex;
  align-items: center;
  height: 27px;
}
.view {
  width: 41px;
  height: 27px;
  display: flex;
  align-items: center;
  justify-content: center;
}
.view.on { background: #19583a; }
.minus {
  width: 16px;
  margin-left: 2px;
  color: #fff;
  text-align: center;
}
.zoom-track {
  width: 125px;
  height: 1px;
  background: #fff;
  position: relative;
}
.zoom-track i {
  position: absolute;
  left: 62px;
  top: -6px;
  width: 3px;
  height: 12px;
  background: #fff;
}
.plus {
  width: 20px;
  text-align: center;
  font-size: 20px;
  line-height: 20px;
}
.pct {
  width: 60px;
  font-size: 15px;
  padding-left: 11px;
  box-sizing: border-box;
}

/* strip below status bar */
.strip {
  height: 9px;
  flex: none;
  background: #eeeeee;
  padding-left: 60px;
  overflow: hidden;
}
.strip-win {
  width: 360px;
  height: 9px;
  margin-top: 1px;
  background: #fff;
  display: flex;
  justify-content: flex-end;
  padding-right: 20px;
  box-sizing: border-box;
}

/* dialog */
.dialog {
  position: absolute;
  left: 716px;
  top: 349px;
  width: 531px;
  height: 471px;
  background: #f0f0f0;
  border: 1px solid #6f6f6f;
  box-sizing: border-box;
  box-shadow: 0 4px 20px rgba(0, 0, 0, .35);
  color: #222;
  font-size: 15px;
}
.dlg-title {
  height: 32px;
  background: #fff;
  display: flex;
  align-items: center;
  padding: 0 22px 3px 3px;
  box-sizing: border-box;
  color: #222;
}
.dlg-q {
  margin-left: auto;
  margin-right: 48px;
  font-size: 15px;
}
.dlg-tabs {
  display: flex;
  margin: 11px 0 0 10px;
  height: 30px;
}
.dlg-tab {
  height: 30px;
  background: #f0f0f0;
  border: 1px solid #d9d9d9;
  border-bottom: 0;
  border-left: 0;
  box-sizing: border-box;
  text-align: center;
  line-height: 30px;
  padding-right: 3px;
}
.dlg-tab.active {
  background: #fff;
  height: 32px;
  margin-top: -2px;
  border-left: 1px solid #d9d9d9;
  position: relative;
  z-index: 1;
  line-height: 34px;
}
.panel {
  margin-left: 8px;
  width: 511px;
  height: 338px;
  background: #fff;
  border: 1px solid #d9d9d9;
  box-sizing: border-box;
  padding: 18px 10px 0 11px;
}
.check-row {
  display: flex;
  align-items: center;
  height: 16px;
  gap: 5px;
}
.check {
  width: 16px;
  height: 15px;
  border: 1px solid #555;
  box-sizing: border-box;
  display: flex;
  align-items: center;
  justify-content: center;
}
.section {
  display: flex;
  align-items: center;
  margin-top: 25px;
  height: 18px;
  gap: 5px;
}
.section i {
  flex: 1;
  height: 1px;
  background: #dcdcdc;
}
.form {
  display: flex;
  margin-top: 11px;
  padding-left: 12px;
}
.form-left {
  width: 201px;
  margin-right: 12px;
  flex: none;
}
.form-right {
  flex: 1;
  min-width: 0;
}
.f-label {
  height: 18px;
  line-height: 18px;
}
.f-label.second { margin-top: 10px; }
.select {
  margin-top: 6px;
  height: 32px;
  border: 1px solid #ababab;
  box-sizing: border-box;
  display: flex;
  justify-content: space-between;
  line-height: 30px;
  padding-left: 3px;
}
.sel-btn {
  width: 21px;
  background: #dddddd;
  border-left: 1px solid #ababab;
  display: flex;
  align-items: center;
  justify-content: center;
}
.err {
  display: block;
  margin: 72px 0 0 78px;
}
.text-input {
  margin-top: 6px;
  height: 29px;
  border: 1px solid #ababab;
  box-sizing: border-box;
  line-height: 23px;
  padding-left: 3px;
  font-size: 15px;
}
.textarea {
  margin-top: 7px;
  height: 125px;
  border: 1px solid #ababab;
  box-sizing: border-box;
  position: relative;
  padding: 0 3px;
  line-height: 22px;
  font-size: 15px;
}
.text-caret {
  display: inline-block;
  width: 1px;
  height: 16px;
  background: #000;
  vertical-align: -3px;
}
.ta-scroll {
  position: absolute;
  right: 1px;
  top: 2px;
  bottom: 2px;
  width: 20px;
  background: #f0f0f0;
  display: flex;
  flex-direction: column;
  justify-content: space-between;
  align-items: center;
  padding: 6px 0 8px;
  box-sizing: border-box;
}
.dlg-foot {
  display: flex;
  margin: 14px 0 0 8px;
  position: relative;
  height: 33px;
}
.btn {
  height: 33px;
  background: #e1e1e1;
  border: 1px solid #adadad;
  box-sizing: border-box;
  text-align: center;
  line-height: 31px;
  color: #222;
}
.btn.clear { width: 102px; }
.btn.ok {
  width: 98px;
  margin-left: 199px;
  border: 2px solid #0078d7;
  line-height: 29px;
}
.btn.cancel {
  width: 98px;
  margin-left: 14px;
}

/* annotations */
.marks {
  position: absolute;
  left: 0;
  top: 0;
  pointer-events: none;
}
.note {
  position: absolute;
  left: 1319px;
  top: 563px;
  font-size: 30px;
  line-height: 44px;
  color: #fb3b3b;
  white-space: nowrap;
}
.watermark {
  position: absolute;
  left: 1420px;
  top: 971px;
  font-size: 39px;
  line-height: 46px;
  color: #fff;
  white-space: nowrap;
  text-shadow: 2px 2px 0 #000, -1px -1px 0 #000, 1px -1px 0 #000, -1px 1px 0 #000;
}
</style>
